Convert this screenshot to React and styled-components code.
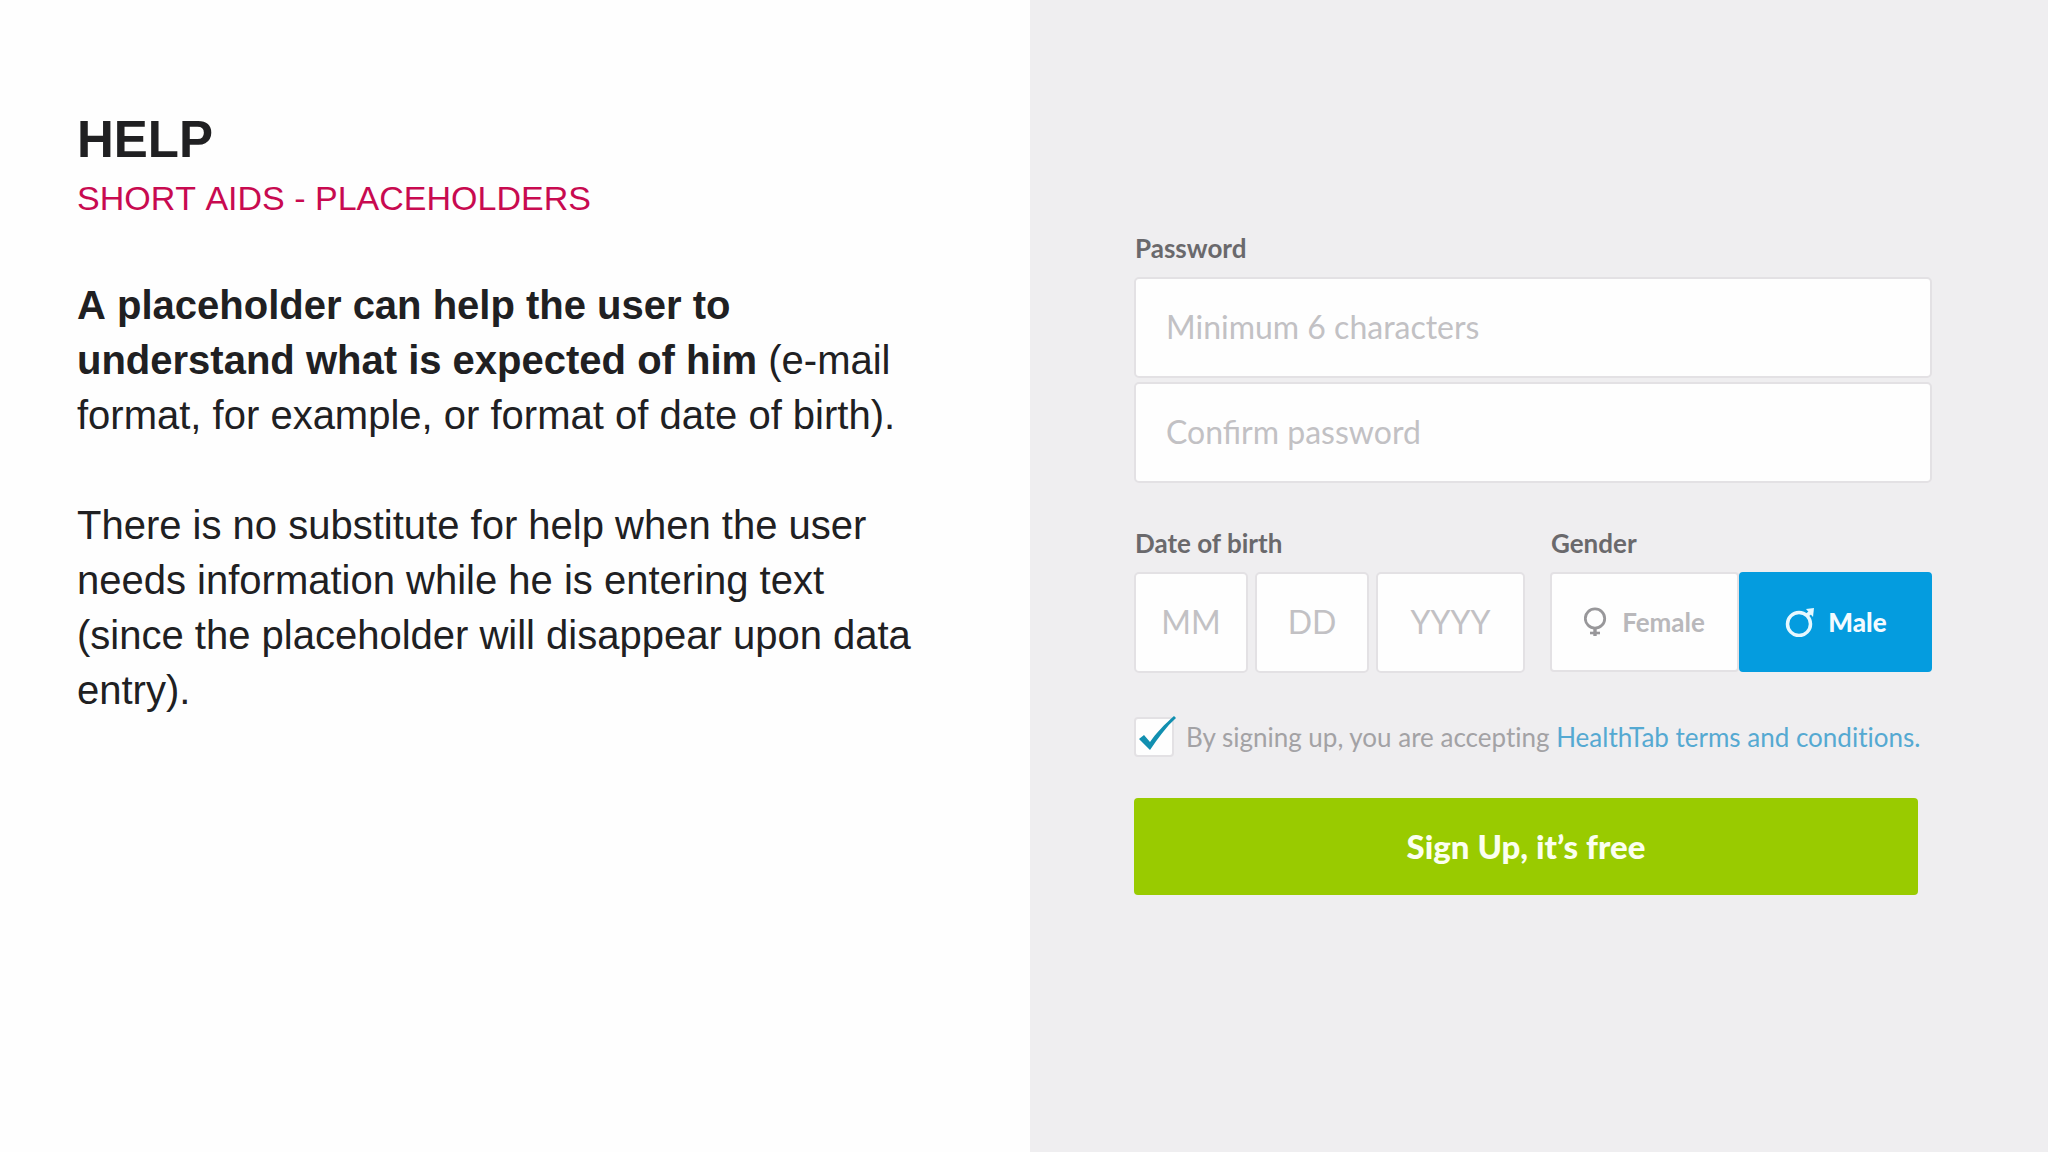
import { useState } from "react";
import styled, { createGlobalStyle } from "styled-components";

const GlobalStyle = createGlobalStyle`
  * {
    box-sizing: border-box;
  }
  body {
    margin: 0;
    background-color: #fefefe;
  }
`;

function FemaleIcon() {
  return (
    <svg width="24" height="30" viewBox="0 0 24 30" fill="none" aria-hidden="true">
      <circle cx="11" cy="11.5" r="9.7" stroke="currentColor" strokeWidth="2.8" />
      <path d="M11 21v8" stroke="currentColor" strokeWidth="3.4" />
      <path d="M6 26h10" stroke="currentColor" strokeWidth="2.6" />
    </svg>
  );
}

function MaleIcon() {
  return (
    <svg width="30" height="30" viewBox="0 0 30 30" fill="none" aria-hidden="true">
      <circle cx="15" cy="17" r="11.5" stroke="currentColor" strokeWidth="3.5" />
      <path d="M22 9l5-4" stroke="currentColor" strokeWidth="4" />
      <path d="M22 2l8-1-1 9z" fill="currentColor" />
    </svg>
  );
}

function CheckIcon() {
  return (
    <svg width="40" height="40" viewBox="0 0 40 40" aria-hidden="true">
      <path
        d="M3 20l5-4 6 7C20 14 29 5 38-3l2 2C30 8 22 19 14 31z"
        fill="#118fb0"
      />
    </svg>
  );
}

function App() {
  const [gender, setGender] = useState("male");
  const [accepted, setAccepted] = useState(true);

  return (
    <>
      <GlobalStyle />
      <Slide>
        <TextPanel>
          <Title>HELP</Title>
          <Subtitle>SHORT AIDS - PLACEHOLDERS</Subtitle>
          <Paragraph>
            <strong>
              A placeholder can help the user to understand what is expected of
              him
            </strong>{" "}
            (e-mail format, for example, or format of date of birth).
          </Paragraph>
          <Paragraph>
            There is no substitute for help when the user needs information
            while he is entering text (since the placeholder will disappear upon
            data entry).
          </Paragraph>
        </TextPanel>
        <FormPanel>
          <form onSubmit={(e) => e.preventDefault()}>
            <Label htmlFor="password">Password</Label>
            <PasswordFields>
              <Field
                id="password"
                type="password"
                placeholder="Minimum 6 characters"
              />
              <Field
                type="password"
                aria-label="Confirm password"
                placeholder="Confirm password"
              />
            </PasswordFields>
            <Row>
              <DateGroup role="group" aria-labelledby="birth">
                <Label as="div" id="birth">
                  Date of birth
                </Label>
                <DateFields>
                  <Field $center aria-label="Month" placeholder="MM" />
                  <Field $center aria-label="Day" placeholder="DD" />
                  <Field $center aria-label="Year" placeholder="YYYY" />
                </DateFields>
              </DateGroup>
              <GenderGroup role="radiogroup" aria-labelledby="gender">
                <Label as="div" id="gender">
                  Gender
                </Label>
                <Toggle>
                  <Option $active={gender === "female"}>
                    <HiddenInput
                      type="radio"
                      name="gender"
                      checked={gender === "female"}
                      onChange={() => setGender("female")}
                    />
                    <FemaleIcon />
                    Female
                  </Option>
                  <Option $active={gender === "male"}>
                    <HiddenInput
                      type="radio"
                      name="gender"
                      checked={gender === "male"}
                      onChange={() => setGender("male")}
                    />
                    <MaleIcon />
                    Male
                  </Option>
                </Toggle>
              </GenderGroup>
            </Row>
            <Terms>
              <CheckBox>
                <HiddenInput
                  id="terms"
                  type="checkbox"
                  checked={accepted}
                  onChange={(e) => setAccepted(e.target.checked)}
                />
                {accepted && <CheckIcon />}
              </CheckBox>
              <TermsText htmlFor="terms">
                By signing up, you are accepting{" "}
                <a href="#terms">HealthTab terms and conditions.</a>
              </TermsText>
            </Terms>
            <SubmitButton type="submit">Sign Up, it’s free</SubmitButton>
          </form>
        </FormPanel>
      </Slide>
    </>
  );
}

export default App;

const Slide = styled.main`
  display: grid;
  grid-template-columns: 1030fr 1018fr;
  min-height: 100vh;
`;

const TextPanel = styled.section`
  padding: 110px 100px 60px 77px;
  font-family: "Liberation Sans", Arial, sans-serif;
  font-kerning: none;
  color: #202022;
`;

const Title = styled.h1`
  margin: 0;
  font-size: 51px;
  line-height: 60px;
`;

const Subtitle = styled.h2`
  margin: 0 0 52px;
  font-size: 34px;
  font-weight: 400;
  line-height: 56px;
  color: #c80a50;
`;

const Paragraph = styled.p`
  margin: 0 0 55px;
  font-size: 40px;
  line-height: 55px;
`;

const FormPanel = styled.section`
  padding: 231px 116px 60px 104px;
  background-color: #efeef0;
  font-family: Lato, sans-serif;
  font-variant-ligatures: none;
`;

const Label = styled.label`
  display: block;
  margin-bottom: 12px;
  padding-left: 1px;
  font-size: 26px;
  font-weight: 700;
  line-height: 34px;
  color: #6a696c;
`;

const Field = styled.input`
  width: 100%;
  min-width: 0;
  height: 101px;
  padding: ${(props) => (props.$center ? "0 0 2px" : "0 30px 2px")};
  border: 2px solid #e3e1e4;
  border-radius: 5px;
  background-color: #fefefe;
  font-family: inherit;
  font-size: 32px;
  text-align: ${(props) => (props.$center ? "center" : "left")};
  color: #6a696c;

  &::placeholder {
    color: #c2c1c4;
    opacity: 1;
  }
`;

const PasswordFields = styled.div`
  display: grid;
  gap: 4px;
  margin-bottom: 43px;
`;

const Row = styled.div`
  display: flex;
  gap: 25px;
  margin-bottom: 44px;
`;

const DateGroup = styled.div`
  flex: 391;
`;

const DateFields = styled.div`
  display: grid;
  grid-template-columns: 114fr 114fr 149fr;
  gap: 7px;
`;

const GenderGroup = styled.div`
  flex: 382;
`;

const Toggle = styled.div`
  display: grid;
  grid-template-columns: 189fr 193fr;
  height: 100px;
`;

const Option = styled.label`
  display: flex;
  align-items: center;
  justify-content: center;
  gap: 14px;
  border: 2px solid ${(props) => (props.$active ? "#049cdf" : "#e3e1e4")};
  border-radius: 4px;
  background-color: ${(props) => (props.$active ? "#049cdf" : "#fefefe")};
  font-size: 26px;
  font-weight: ${(props) => (props.$active ? 900 : 700)};
  color: ${(props) => (props.$active ? "#f4fbff" : "#b9b8bb")};

  svg {
    color: ${(props) => (props.$active ? "#e6f8ff" : "#98979a")};
  }
`;

const HiddenInput = styled.input`
  position: absolute;
  width: 1px;
  height: 1px;
  margin: 0;
  opacity: 0;
`;

const Terms = styled.div`
  display: flex;
  align-items: center;
  gap: 12px;
  margin-bottom: 41px;
`;

const CheckBox = styled.label`
  flex: none;
  width: 40px;
  height: 40px;
  border: 2px solid #e3e1e4;
  border-radius: 4px;
  background-color: #fefefe;

  svg {
    display: block;
    overflow: visible;
  }
`;

const TermsText = styled.label`
  font-size: 26px;
  line-height: 32px;
  white-space: nowrap;
  color: #a3a2a5;

  a {
    color: #55a9d2;
    text-decoration: none;
  }
`;

const SubmitButton = styled.button`
  display: block;
  width: calc(100% - 14px);
  height: 97px;
  padding: 0 0 2px;
  border: 0;
  border-radius: 4px;
  background-color: #99cb00;
  font-family: inherit;
  font-size: 33px;
  font-weight: 900;
  color: #fbfff0;
`;
